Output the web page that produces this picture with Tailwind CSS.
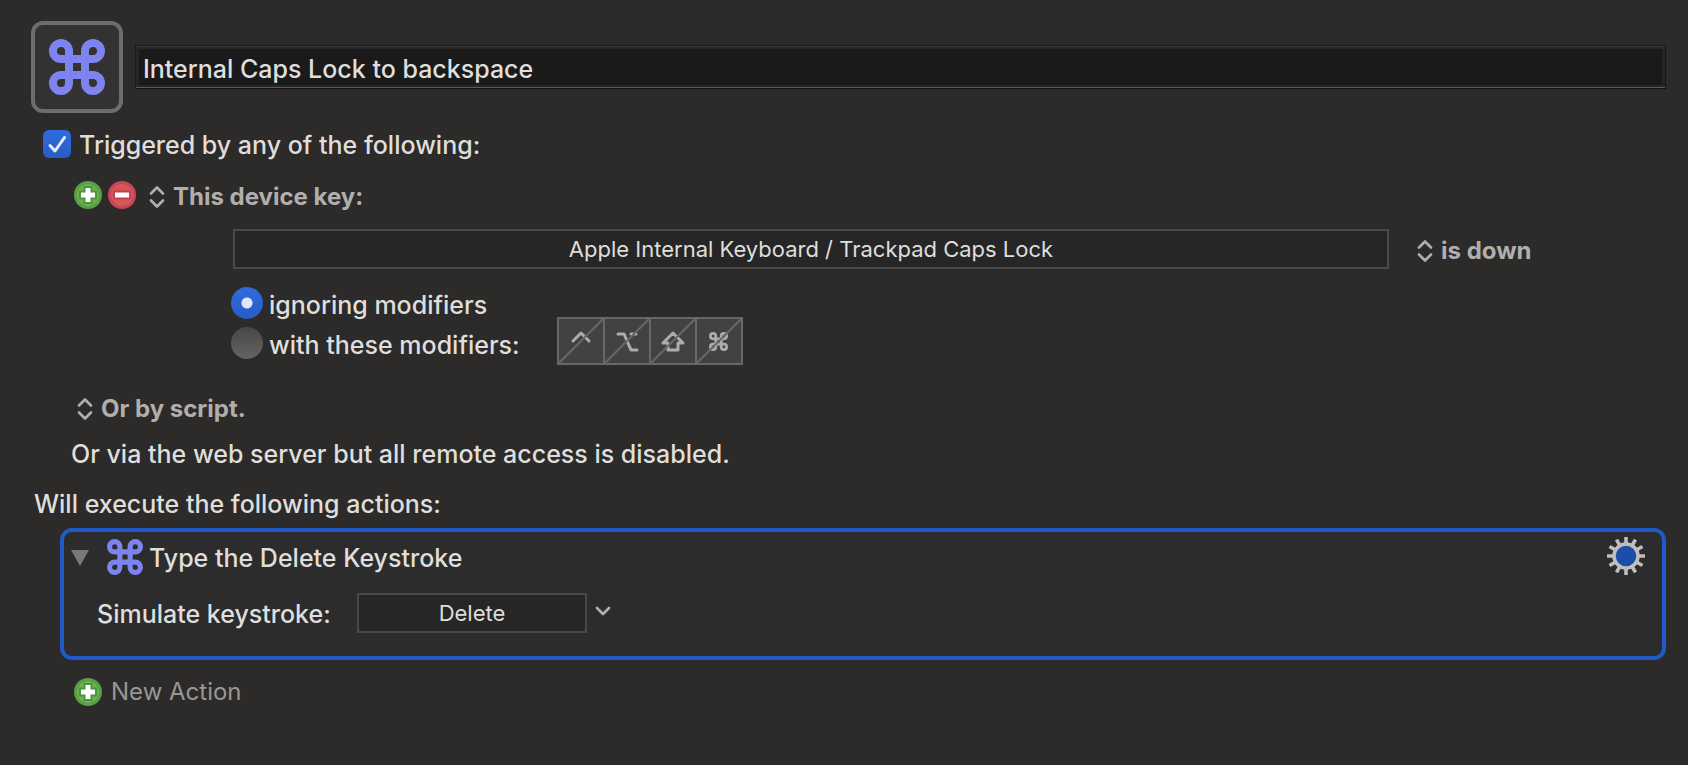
<!DOCTYPE html>
<html lang="en">
<head>
    <meta charset="UTF-8">
    <meta name="viewport" content="width=device-width, initial-scale=1.0">
    <title>Internal Caps Lock to backspace</title>
    <script src="https://cdn.jsdelivr.net/npm/@tailwindcss/browser@4"></script>
</head>
<body class="min-h-screen bg-[#2c2b29] font-['Inter','Liberation_Sans',sans-serif] text-[25px] leading-8 font-medium text-[#dfdedd]">
    <!-- Shared icons -->
    <svg class="hidden">
        <symbol id="command" viewBox="0 0 56 56">
            <path d="M20 20V12A8 8 0 1 0 12 20H44A8 8 0 1 0 36 12V44A8 8 0 1 0 44 36H12A8 8 0 1 0 20 44Z" fill="none" stroke="currentColor" stroke-width="8"/>
        </symbol>
        <symbol id="updown" viewBox="0 0 16 24">
            <path d="M2 8.5 8 2.5l6 6M2 15.500l6 6 6-6" fill="none" stroke="currentColor" stroke-width="2.600" stroke-linecap="round" stroke-linejoin="round"/>
        </symbol>
        <symbol id="plus" viewBox="0 0 28 28">
            <circle cx="14" cy="14" r="14" fill="#58a046"/>
            <circle cx="14" cy="14" r="11" fill="#72ae4f"/>
            <path d="M14 5v18M5 14h18" stroke="#4a953f" stroke-width="9"/>
            <path d="M14 7v14M7 14h14" stroke="#fff" stroke-width="5"/>
        </symbol>
        <symbol id="minus" viewBox="0 0 28 28">
            <circle cx="14" cy="14" r="14" fill="#cb4458"/>
            <circle cx="14" cy="14" r="11" fill="#d35a52"/>
            <path d="M5 14h18" stroke="#c43f55" stroke-width="9"/>
            <path d="M7 14h14" stroke="#fff" stroke-width="5"/>
        </symbol>
    </svg>

    <main class="pt-[21px] pr-[22px] pb-14 pl-[31px]">
        <!-- Macro name -->
        <header class="flex items-center gap-3">
            <button aria-label="Macro icon" class="flex size-[92px] shrink-0 items-center justify-center rounded-xl border-4 border-[#6e6d6b] bg-[#343230] text-[#7d84f0]">
                <svg class="size-14"><use href="#command"/></svg>
            </button>
            <input type="text" aria-label="Macro name" value="Internal Caps Lock to backspace" class="h-11 min-w-0 flex-1 border border-[#191919] border-b-[#111] bg-[#1a1a1a] px-[7px] pt-1 shadow-[inset_0_1px_#3a3a3a,inset_0_-1px_#5a5a5a,inset_0_0_0_3px_#262626] outline-none">
        </header>

        <!-- Triggers -->
        <div class="mt-[14px] ml-3 flex items-center gap-2">
            <span class="relative size-7">
                <input id="triggered" type="checkbox" checked class="block size-7 appearance-none rounded-md bg-linear-to-b from-[#306bdf] to-[#285cc4]">
                <svg viewBox="0 0 28 28" class="pointer-events-none absolute inset-0"><path d="M7 15.500 12 21 21.500 7.500" fill="none" stroke="#e6ecfa" stroke-width="3" stroke-linecap="round" stroke-linejoin="round"/></svg>
            </span>
            <label for="triggered" class="pt-0.5">Triggered by any of the following:</label>
        </div>

        <div class="mt-[18px] ml-[43px] flex items-center">
            <button aria-label="Add trigger"><svg class="size-7"><use href="#plus"/></svg></button>
            <button aria-label="Remove trigger" class="ml-1.5"><svg class="size-7"><use href="#minus"/></svg></button>
            <button class="ml-[13px] flex items-center gap-2 pt-1 text-2xl leading-7 font-bold text-[#b0afae]">
                <svg class="h-6 w-4"><use href="#updown"/></svg>This device key:
            </button>
        </div>

        <div class="mt-[18px] ml-[202px] flex items-center">
            <button class="h-10 flex-1 border-2 border-[#494949] bg-[#262626] text-[22px] font-normal">Apple Internal Keyboard / Trackpad Caps Lock</button>
            <button class="ml-7 flex w-[249px] items-center gap-2 pt-1 text-2xl leading-7 font-bold text-[#b0afae]">
                <svg class="h-6 w-4"><use href="#updown"/></svg>is down
            </button>
        </div>

        <div class="mt-[14px] ml-[200px] flex items-end">
            <div class="w-[326px] pb-0.5">
                <div class="flex h-10 items-center gap-1.5">
                    <input id="ignoring" type="radio" name="modifiers" checked class="size-8 appearance-none rounded-full bg-linear-to-b from-[#306bdf] to-[#285cc4] checked:bg-[radial-gradient(circle,#dfe8fa_5px,transparent_6px),linear-gradient(#306bdf,#285cc4)]">
                    <label for="ignoring" class="pt-1">ignoring modifiers</label>
                </div>
                <div class="flex h-10 items-center gap-1.5">
                    <input id="with-these" type="radio" name="modifiers" class="size-8 appearance-none rounded-full bg-linear-to-b from-[#484746] to-[#656463]">
                    <label for="with-these" class="pt-1">with these modifiers:</label>
                </div>
            </div>
            <div class="flex divide-x-2 divide-[#676767] border-2 border-[#676767] bg-[#424242]">
                <button aria-label="Control"><svg viewBox="0 0 44 44" class="size-11" fill="none" stroke="#adadad" stroke-width="3" stroke-linecap="round" stroke-linejoin="round"><path d="m14 22 8-8 8 8"/><path d="M0 44 44 0" stroke="#676767" stroke-width="2"/></svg></button>
                <button aria-label="Option"><svg viewBox="0 0 44 44" class="size-11" fill="none" stroke="#adadad" stroke-width="3" stroke-linecap="round" stroke-linejoin="round"><path d="M13 15h6l7 16h6M26 15h5"/><path d="M0 44 44 0" stroke="#676767" stroke-width="2"/></svg></button>
                <button aria-label="Shift"><svg viewBox="0 0 44 44" class="size-11" fill="none" stroke="#adadad" stroke-width="3" stroke-linecap="round" stroke-linejoin="round"><path d="m22 14 10 10h-5v7H17v-7h-5Z"/><path d="M0 44 44 0" stroke="#676767" stroke-width="2"/></svg></button>
                <button aria-label="Command"><svg viewBox="0 0 44 44" class="size-11 text-[#adadad]"><use href="#command" x="12" y="13" width="19" height="19"/><path d="M0 44 44 0" stroke="#676767" stroke-width="2"/></svg></button>
            </div>
        </div>

        <button class="mt-[26px] ml-[46px] flex items-center gap-2 pt-1 text-2xl leading-7 font-bold text-[#b0afae]">
            <svg class="h-6 w-4"><use href="#updown"/></svg>Or by script.
        </button>
        <p class="mt-[15px] ml-10">Or via the web server but all remote access is disabled.</p>

        <!-- Actions -->
        <h2 class="mt-[18px] ml-[3px]">Will execute the following actions:</h2>
        <section class="mt-2 ml-[29px] rounded-xl border-4 border-[#2259c8] bg-[#2c2c2c] pt-[7px] pb-[23px] pl-[7px]">
            <div class="flex h-9 items-center">
                <button aria-label="Collapse action" class="pt-0.5"><svg viewBox="0 0 18 16" class="h-4 w-[18px]"><path d="M0 0h18L9 16Z" fill="#797979"/></svg></button>
                <svg class="ml-[18px] size-9 text-[#7d84f0]"><use href="#command"/></svg>
                <h3 class="ml-1.5 pt-0.5">Type the Delete Keystroke</h3>
                <button aria-label="Action options" class="mr-[17px] ml-auto pb-0.5">
                    <svg viewBox="-19 -19 38 38" class="size-[38px]">
                        <path d="M0-19V19M-19 0H19M-9.500-16.450 9.500 16.450M9.500-16.450-9.500 16.450M-16.450-9.500 16.450 9.500M16.450-9.500-16.450 9.500" stroke="#bfbfbf" stroke-width="3.600"/>
                        <circle r="12" fill="#1c4ea8" stroke="#bfbfbf" stroke-width="3.500"/>
                    </svg>
                </button>
            </div>
            <div class="mt-[18px] ml-[26px] flex items-center">
                <span class="w-[260px] pt-0.5">Simulate keystroke:</span>
                <button class="h-10 w-[230px] border-2 border-[#494949] bg-[#262626] text-[22px] font-normal">Delete</button>
                <button aria-label="Choose key" class="ml-2 pb-1"><svg viewBox="0 0 16 12" class="h-3 w-4"><path d="m2 3 6 6 6-6" fill="none" stroke="#b0b0b0" stroke-width="2.600" stroke-linecap="round" stroke-linejoin="round"/></svg></button>
            </div>
        </section>

        <button class="mt-4 ml-[43px] flex items-center gap-[9px] text-2xl font-normal text-[#989796]">
            <svg class="size-7"><use href="#plus"/></svg>New Action
        </button>
    </main>
</body>
</html>
